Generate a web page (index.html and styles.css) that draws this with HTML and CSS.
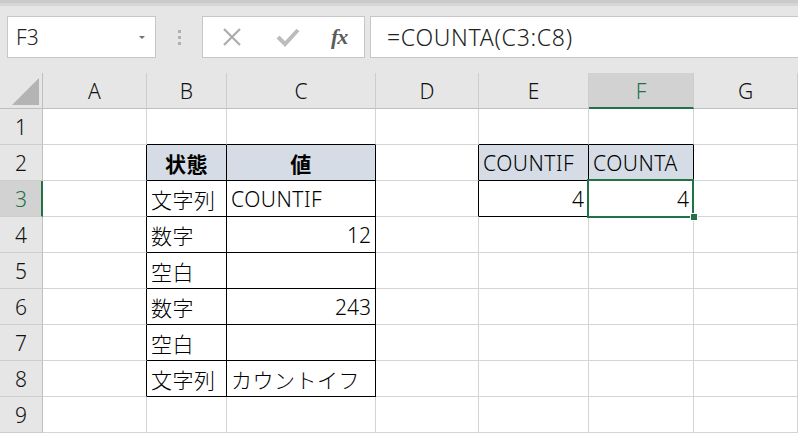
FILE: index.html
```html
<!DOCTYPE html>
<html lang="ja">
<head>
    <meta charset="UTF-8">
    <title>COUNTA</title>
    <link rel="stylesheet" href="styles.css">
</head>
<body>

    <div class="toolbar">
        <div class="topline"></div>
        <div class="formula-row">
            <div class="namebox">
                <span>F3</span>
                <span class="caret"></span>
            </div>
            <div class="grip"><i></i><i></i><i></i></div>
            <div class="buttons">
                <svg class="icon" width="22" height="22" viewBox="0 0 22 22">
                    <path d="M3 3 L19 19 M19 3 L3 19" stroke="#acacac" stroke-width="2.2" fill="none"/>
                </svg>
                <svg class="icon" width="26" height="22" viewBox="0 0 26 22">
                    <path d="M3 11 L10 18 L23 4" stroke="#bcbcbc" stroke-width="4" fill="none"/>
                </svg>
                <span class="fx"><i>f</i><i>x</i></span>
            </div>
            <div class="formula">=COUNTA(C3:C8)</div>
        </div>
    </div>

    <div class="sheet">
        <div class="corner"><span class="tri"></span></div>
        <div class="colhead">A</div>
        <div class="colhead">B</div>
        <div class="colhead">C</div>
        <div class="colhead">D</div>
        <div class="colhead">E</div>
        <div class="colhead active">F</div>
        <div class="colhead">G</div>

        <!-- 1 -->
        <div class="rowhead">1</div>
        <div class="cell"></div>
        <div class="cell b"></div>
        <div class="cell b"></div>
        <div class="cell"></div>
        <div class="cell b"></div>
        <div class="cell b"></div>
        <div class="cell"></div>

        <!-- 2 -->
        <div class="rowhead">2</div>
        <div class="cell r"></div>
        <div class="cell r b head center bold">状態</div>
        <div class="cell r b head center bold">値</div>
        <div class="cell r"></div>
        <div class="cell r b head">COUNTIF</div>
        <div class="cell r b head">COUNTA</div>
        <div class="cell"></div>

        <!-- 3 -->
        <div class="rowhead active">3</div>
        <div class="cell r"></div>
        <div class="cell r b">文字列</div>
        <div class="cell r b">COUNTIF</div>
        <div class="cell r"></div>
        <div class="cell r b num">4</div>
        <div class="cell r b num selected">4<span class="handle"></span></div>
        <div class="cell"></div>

        <!-- 4 -->
        <div class="rowhead">4</div>
        <div class="cell r"></div>
        <div class="cell r b">数字</div>
        <div class="cell r b num">12</div>
        <div class="cell"></div>
        <div class="cell"></div>
        <div class="cell"></div>
        <div class="cell"></div>

        <!-- 5 -->
        <div class="rowhead">5</div>
        <div class="cell r"></div>
        <div class="cell r b">空白</div>
        <div class="cell r b"></div>
        <div class="cell"></div>
        <div class="cell"></div>
        <div class="cell"></div>
        <div class="cell"></div>

        <!-- 6 -->
        <div class="rowhead">6</div>
        <div class="cell r"></div>
        <div class="cell r b">数字</div>
        <div class="cell r b num">243</div>
        <div class="cell"></div>
        <div class="cell"></div>
        <div class="cell"></div>
        <div class="cell"></div>

        <!-- 7 -->
        <div class="rowhead">7</div>
        <div class="cell r"></div>
        <div class="cell r b">空白</div>
        <div class="cell r b"></div>
        <div class="cell"></div>
        <div class="cell"></div>
        <div class="cell"></div>
        <div class="cell"></div>

        <!-- 8 -->
        <div class="rowhead">8</div>
        <div class="cell r"></div>
        <div class="cell r b">文字列</div>
        <div class="cell r b">カウントイフ</div>
        <div class="cell"></div>
        <div class="cell"></div>
        <div class="cell"></div>
        <div class="cell"></div>

        <!-- 9 -->
        <div class="rowhead">9</div>
        <div class="cell"></div>
        <div class="cell"></div>
        <div class="cell"></div>
        <div class="cell"></div>
        <div class="cell"></div>
        <div class="cell"></div>
        <div class="cell"></div>
    </div>

</body>
</html>
```

FILE: styles.css
```css
body {
    margin: 0;
    background-color: #e6e6e6;
    font-family: "Noto Sans", "Noto Sans CJK JP", sans-serif;
    font-weight: 300;
    color: #000;
    overflow: hidden;
}
.toolbar {
    height: 73px;
}
.topline {
    height: 3px;
    background-color: #cacaca;
    border-bottom: 3px solid #d6d6d6;
}
.formula-row {
    display: flex;
    align-items: stretch;
    height: 42px;
    margin-top: 10px;
    padding-left: 7px;
}
.namebox {
    width: 149px;
    background-color: #fff;
    border: 1px solid #c6c6c6;
    display: flex;
    align-items: center;
    justify-content: space-between;
    padding: 0 10px 0 8px;
    box-sizing: border-box;
    font-size: 21px;
    color: #222;
}
.caret {
    width: 0;
    height: 0;
    border-left: 3px solid transparent;
    border-right: 3px solid transparent;
    border-top: 3px solid #707070;
}
.grip {
    width: 46px;
    display: flex;
    flex-direction: column;
    align-items: center;
    justify-content: center;
    gap: 3px;
}
.grip i {
    width: 3px;
    height: 3px;
    background-color: #b0b0b0;
}
.buttons {
    width: 163px;
    background-color: #fff;
    border: 1px solid #c6c6c6;
    box-sizing: border-box;
    display: flex;
    align-items: center;
    padding: 0 0 0 18px;
    margin-right: 5px;
}
.icon {
    display: block;
}
.icon + .icon {
    margin-left: 32px;
}
.fx {
    margin-left: 30px;
    font-family: "Liberation Serif", serif;
    font-size: 22px;
    font-weight: bold;
    color: #5c5c5c;
    letter-spacing: -1px;
}
.formula {
    flex: 1;
    background-color: #fff;
    border: 1px solid #c6c6c6;
    border-right: none;
    display: flex;
    align-items: center;
    padding-left: 16px;
    font-size: 23px;
    letter-spacing: 0.7px;
    color: #222;
}
.sheet {
    display: grid;
    grid-template-columns: 43px 104px 80px 149px 103px 110px 105px 104px;
    grid-auto-rows: 36px;
    background-color: #fff;
}
.sheet > div {
    box-sizing: border-box;
    border-right: 1px solid #d4d4d4;
    border-bottom: 1px solid #d4d4d4;
    font-size: 21px;
    display: flex;
    align-items: center;
    white-space: nowrap;
}
.corner {
    background-color: #e6e6e6;
    position: relative;
}
.sheet > .corner {
    border-right-color: #bfbfbf;
    border-bottom-color: #bfbfbf;
}
.tri {
    position: absolute;
    right: 3px;
    bottom: 3px;
    width: 0;
    height: 0;
    border-left: 27px solid transparent;
    border-bottom: 27px solid #b4b4b4;
}
.sheet > .colhead {
    background-color: #e6e6e6;
    justify-content: center;
    border-right-color: #cdcdcd;
    border-bottom-color: #bfbfbf;
    color: #111;
}
.sheet > .rowhead {
    background-color: #e6e6e6;
    justify-content: center;
    border-right-color: #bfbfbf;
    border-bottom-color: #cdcdcd;
    color: #111;
}
.sheet > .colhead.active {
    background-color: #d2d2d2;
    color: #217346;
    border-bottom: 2px solid #217346;
    padding-top: 1px;
}
.sheet > .rowhead.active {
    background-color: #d2d2d2;
    color: #217346;
    border-right: 2px solid #217346;
    padding-left: 1px;
}
.cell {
    padding: 0 4px;
    letter-spacing: 0.5px;
}
.sheet > .r {
    border-right-color: #000;
}
.sheet > .b {
    border-bottom-color: #000;
}
.head {
    background-color: #d6dce5;
}
.center {
    justify-content: center;
}
.bold {
    font-weight: bold;
}
.num {
    justify-content: flex-end;
}
.sheet > .num {
    padding-right: 4px;
    letter-spacing: 0;
}
.selected {
    position: relative;
}
.selected::after {
    content: "";
    position: absolute;
    left: -2px;
    top: -2px;
    right: -1px;
    bottom: -2px;
    border: 2px solid #217346;
}
.handle {
    position: absolute;
    right: -5px;
    bottom: -5px;
    width: 6px;
    height: 6px;
    background-color: #217346;
    border: 1px solid #fff;
    z-index: 1;
}
```
